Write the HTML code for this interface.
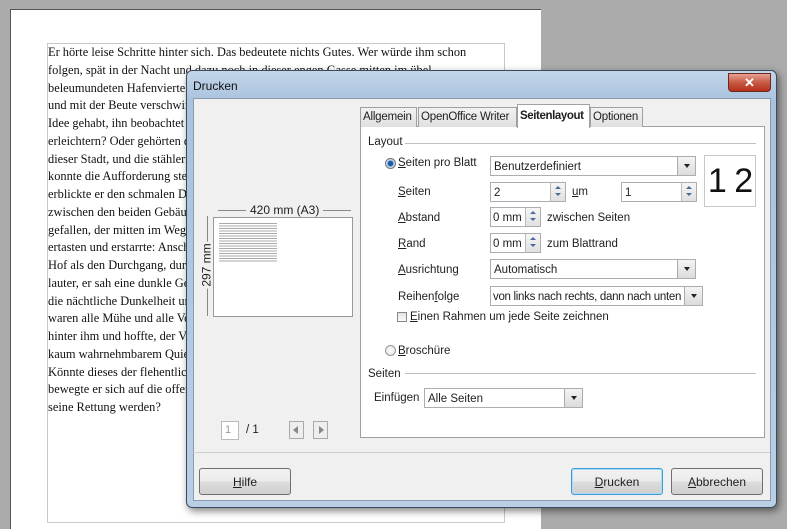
<!DOCTYPE html>
<html><head><meta charset="utf-8"><style>
*{margin:0;padding:0;box-sizing:border-box;white-space:nowrap}
body{width:787px;height:521px;overflow:hidden;background:#ababab;position:relative;font-family:"Liberation Sans",sans-serif;font-size:12px;color:#1e1e1e}
.a{position:absolute}
#page{left:10px;top:9px;width:531px;height:520px;background:#fff;border-left:1px solid #555;border-top:1px solid #555}
#tb{left:47px;top:43px;width:458px;height:480px;border:1px solid #c8c8c8}
#txt{left:48px;top:44px;width:470px;font-family:"Liberation Serif",serif;font-size:12.4px;line-height:17.75px;color:#111}
#dlg{left:186px;top:70px;width:591px;height:438px;border-radius:6px;background:linear-gradient(#c3d6ea,#a9c2dd 30px,#b9cfe6);border:1px solid #3d4a5a;box-shadow:2px 3px 8px rgba(0,0,0,.5)}
#client{left:6px;top:27px;width:578px;height:403px;background:#f0f0f0;border:1px solid #8a9bb0}
.u{text-decoration:underline}
.fld{position:absolute;background:#fff;border:1px solid #abadb3;height:20px;padding:3px 3px 1px;font-size:11.5px;line-height:14px;overflow:hidden}
.dd::after{content:"";position:absolute;right:0;top:0;width:17px;height:18px;background:linear-gradient(#f4f4f4,#dcdcdc);border-left:1px solid #aaa}
.dd::before{content:"";position:absolute;right:5px;top:7px;border:3px solid transparent;border-top:4px solid #222;z-index:2}
.spin{position:absolute;width:15px;height:18px;right:0;top:0;background:linear-gradient(#f6f6f6,#e0e0e0);border-left:1px solid #bbb}
.spin::before{content:"";position:absolute;left:4px;top:0px;border:3px solid transparent;border-bottom:3px solid #4a6a9a}
.spin::after{content:"";position:absolute;left:4px;top:10px;border:3px solid transparent;border-top:3px solid #4a6a9a}
.btn{position:absolute;height:27px;border:1px solid #707070;border-radius:3px;background:linear-gradient(#f2f2f2,#ebebeb 50%,#dddddd 51%,#cfcfcf);text-align:center;line-height:26px;font-size:12px}
.tab{position:absolute;top:107px;height:20px;border:1px solid #a0a0a0;border-bottom:none;background:linear-gradient(#f2f2f2,#e0e0e0);padding:3px 2px 1px;font-size:11.5px;letter-spacing:-0.2px}
.line{position:absolute;height:1px;background:#c0c0c0}
.lbl{position:absolute;font-size:11.5px;margin-top:4px}
</style></head><body>
<div class="a" id="page"></div>
<div class="a" id="tb"></div>
<div class="a" id="txt">Er hörte leise Schritte hinter sich. Das bedeutete nichts Gutes. Wer würde ihm schon<br>folgen, spät in der Nacht und dazu noch in dieser engen Gasse mitten im übel<br>beleumundeten Hafenviertel? Gerade jetzt, wo er das Ding seines Lebens gedreht hatte<br>und mit der Beute verschwinden wollte! Hatte einer seiner zahllosen Kollegen dieselbe<br>Idee gehabt, ihn beobachtet und abgewartet, um ihn nun um die Früchte seiner Arbeit zu<br>erleichtern? Oder gehörten die Schritte hinter ihm zu einem der unzähligen Gesetzeshüter<br>dieser Stadt, und die stählerne Acht um seine Handgelenke würde gleich zuschnappen? Er<br>konnte die Aufforderung stehen zu bleiben schon hören. Gehetzt sah er sich um. Plötzlich<br>erblickte er den schmalen Durchgang. Blitzartig drehte er sich nach rechts und verschwand<br>zwischen den beiden Gebäuden. Beinahe wäre er dabei über den umgestürzten Mülleimer<br>gefallen, der mitten im Weg lag. Er versuchte, sich in der Dunkelheit seinen Weg zu<br>ertasten und erstarrte: Anscheinend gab es keinen anderen Ausweg aus diesem kleinen<br>Hof als den Durchgang, durch den er gekommen war. Die Schritte wurden lauter und<br>lauter, er sah eine dunkle Gestalt um die Ecke biegen. Fieberhaft irrten seine Augen durch<br>die nächtliche Dunkelheit und suchten einen Ausweg. War jetzt wirklich alles vorbei,<br>waren alle Mühe und alle Vorbereitungen umsonst? Er presste sich ganz eng an die Wand<br>hinter ihm und hoffte, der Verfolger würde ihn übersehen, als plötzlich neben ihm mit<br>kaum wahrnehmbarem Quietschen eine Tür im nächtlichen Wind hin und her schwang.<br>Könnte dieses der flehentlich herbeigesehnte Ausweg aus seinem Dilemma sein? Langsam<br>bewegte er sich auf die offene Tür zu, immer dicht an die Mauer gepresst. Würde diese Tür<br>seine Rettung werden?</div>

<div class="a" id="dlg">
 <div class="a" style="left:6px;top:8px;font-size:12px;color:#111">Drucken</div>
 <div class="a" style="left:541px;top:2px;width:43px;height:19px;border-radius:0 0 4px 4px;background:linear-gradient(#e8a093,#c75a45 50%,#b8301c);border:1px solid #6b2a20;color:#fff;text-align:center;font-weight:bold;font-size:13px;line-height:17px">✕</div>
 <div class="a" id="client"></div>
</div>

<div class="line" style="left:218px;top:210px;width:28px;background:#888"></div>
<div class="lbl" style="left:250px;top:199px;font-size:12px">420 mm (A3)</div>
<div class="line" style="left:323px;top:210px;width:28px;background:#888"></div>
<div class="a" style="left:207px;top:216px;width:1px;height:100px;background:#888"></div>
<div class="lbl" style="left:183px;top:254px;transform:rotate(-90deg);background:#f0f0f0;padding:0 2px;font-size:12px">297 mm</div>
<div class="a" style="left:213px;top:217px;width:140px;height:100px;background:#fff;border:1px solid #999"></div>
<div class="a" style="left:219px;top:223px;width:58px;height:40px;background:repeating-linear-gradient(#aaa 0 1px,#fff 1px 2.5px)"></div>
<div class="a" style="left:221px;top:421px;width:18px;height:19px;border:1px solid #bbb;background:#fff;color:#999;font-size:11px;padding:2px 3px">1</div>
<div class="lbl" style="left:246px;top:420px">/ 1</div>
<div class="a" style="left:289px;top:421px;width:15px;height:18px;border:1px solid #aaa;background:#eee"><div class="a" style="left:3px;top:4px;border:4px solid transparent;border-right:5px solid #888;border-left:0"></div></div>
<div class="a" style="left:313px;top:421px;width:15px;height:18px;border:1px solid #aaa;background:#eee"><div class="a" style="left:5px;top:4px;border:4px solid transparent;border-left:5px solid #888;border-right:0"></div></div>

<div class="a" style="left:360px;top:126px;width:405px;height:312px;background:#fff;border:1px solid #a0a0a0"></div>
<div class="tab" style="left:360px;width:57px">Allgemein</div>
<div class="tab" style="left:418px;width:99px">OpenOffice Writer</div>
<div class="tab" style="left:517px;top:104px;height:24px;width:73px;background:#fff;font-weight:bold;padding-top:5px;letter-spacing:-0.4px">Seitenlayout</div>
<div class="tab" style="left:590px;width:53px">Optionen</div>

<div class="lbl" style="left:368px;top:132px">Layout</div>
<div class="line" style="left:405px;top:143px;width:351px"></div>
<div class="a" style="left:385px;top:158px;width:11px;height:11px;border-radius:50%;border:1px solid #777;background:radial-gradient(#1e5ba8 0 2.5px,#9cc4e8 3px,#eee 5px)"></div>
<div class="lbl" style="left:398px;top:153px"><span class="u">S</span>eiten pro Blatt</div>
<div class="fld dd" style="left:490px;top:156px;width:206px">Benutzerdefiniert</div>
<div class="a" style="left:704px;top:155px;width:52px;height:52px;border:1px solid #c8c8c8;background:#fff;font-size:34px;line-height:50px;text-align:center;color:#111;letter-spacing:-1px">1 2</div>

<div class="lbl" style="left:398px;top:182px"><span class="u">S</span>eiten</div>
<div class="fld" style="left:490px;top:182px;width:76px">2<div class="spin"></div></div>
<div class="lbl" style="left:572px;top:182px"><span class="u">u</span>m</div>
<div class="fld" style="left:621px;top:182px;width:76px">1<div class="spin"></div></div>

<div class="lbl" style="left:398px;top:208px"><span class="u">A</span>bstand</div>
<div class="fld" style="left:490px;top:207px;width:51px;padding-left:2px">0 mm<div class="spin"></div></div>
<div class="lbl" style="left:547px;top:208px">zwischen Seiten</div>
<div class="lbl" style="left:398px;top:234px"><span class="u">R</span>and</div>
<div class="fld" style="left:490px;top:233px;width:51px;padding-left:2px">0 mm<div class="spin"></div></div>
<div class="lbl" style="left:547px;top:234px">zum Blattrand</div>

<div class="lbl" style="left:398px;top:260px"><span class="u">A</span>usrichtung</div>
<div class="fld dd" style="left:490px;top:259px;width:206px">Automatisch</div>
<div class="lbl" style="left:398px;top:287px">Reihen<span class="u">f</span>olge</div>
<div class="fld dd" style="left:490px;top:286px;width:213px;letter-spacing:-0.3px;padding-left:2px">von links nach rechts, dann nach unten</div>
<div class="a" style="left:397px;top:312px;width:10px;height:10px;border:1px solid #888;background:linear-gradient(#e4e4e4,#fafafa)"></div>
<div class="lbl" style="left:410px;top:307px"><span class="u">E</span>inen Rahmen um jede Seite zeichnen</div>
<div class="a" style="left:385px;top:345px;width:11px;height:11px;border-radius:50%;border:1px solid #999;background:radial-gradient(#fff,#ddd)"></div>
<div class="lbl" style="left:398px;top:341px"><span class="u">B</span>roschüre</div>

<div class="lbl" style="left:368px;top:364px">Seiten</div>
<div class="line" style="left:405px;top:373px;width:351px"></div>
<div class="lbl" style="left:374px;top:388px">Einfügen</div>
<div class="fld dd" style="left:424px;top:388px;width:159px">Alle Seiten</div>

<div class="line" style="left:193px;top:452px;width:577px;background:#d0d0d0"></div>
<div class="btn" style="left:199px;top:468px;width:92px"><span class="u">H</span>ilfe</div>
<div class="btn" style="left:571px;top:468px;width:92px;border-color:#3c9cd8;box-shadow:inset 0 0 0 1px #a8dcf8"><span class="u">D</span>rucken</div>
<div class="btn" style="left:671px;top:468px;width:92px"><span class="u">A</span>bbrechen</div>
</body></html>
